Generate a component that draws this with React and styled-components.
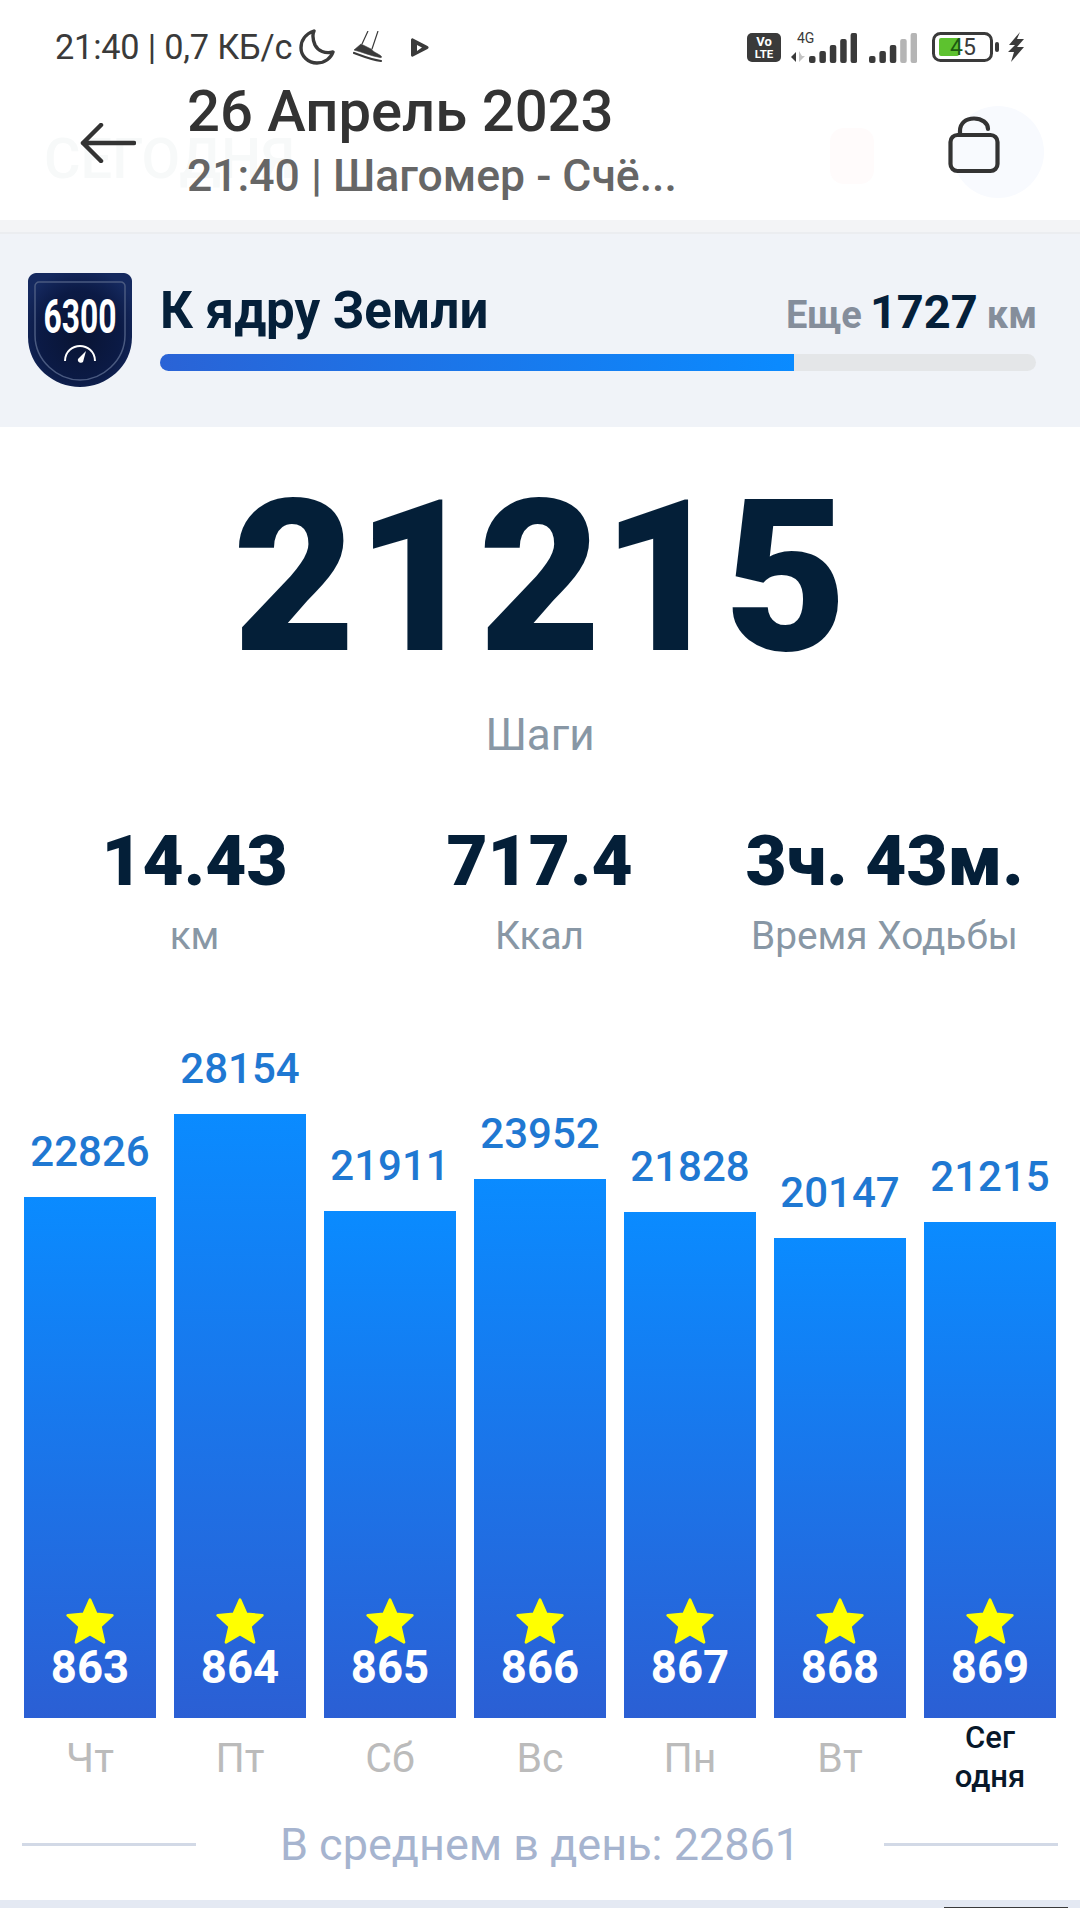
import React from 'react';
import styled, { createGlobalStyle } from 'styled-components';

const GlobalStyle = createGlobalStyle`
	html, body {
		margin: 0;
		padding: 0;
		background: #fff;
		font-family: Roboto, "Liberation Sans", sans-serif;
	}
`;

const Page = styled.div`
	width: 1080px;
	height: 1908px;
	overflow: hidden;
	display: flex;
	flex-direction: column;
	background: #fff;
`;

const StatusBar = styled.div`
	height: 78px;
	padding: 16px 56px 0 55px;
	box-sizing: border-box;
	display: flex;
	align-items: center;
	justify-content: space-between;
	color: #3a3a3a;
`;

const StatusGroup = styled.div`
	display: flex;
	align-items: center;
`;

const StatusText = styled.span`
	font-size: 34.3px;
	letter-spacing: -0.2px;
	margin-right: 7px;
`;

const Header = styled.div`
	position: relative;
	height: 142px;
	display: flex;
	align-items: flex-start;
	padding: 0 32px 0 80px;
	box-sizing: border-box;
`;

const GhostTitle = styled.span`
	position: absolute;
	left: 44px;
	top: 48px;
	font-size: 56px;
	font-weight: 500;
	color: #f7f9f9;
`;

const GhostCircle = styled.span`
	position: absolute;
	right: 36px;
	top: 28px;
	width: 92px;
	height: 92px;
	border-radius: 50%;
	background: #f8fafe;
`;

const GhostMark = styled.span`
	position: absolute;
	left: 830px;
	top: 50px;
	width: 44px;
	height: 56px;
	border-radius: 14px;
	background: #fffbfb;
`;

const BackButton = styled.div`
	position: relative;
	width: 56px;
	height: 40px;
	margin-top: 45px;
	margin-right: 51px;
`;

const HeaderTexts = styled.div`
	position: relative;
	flex: 1;
	display: flex;
	flex-direction: column;
`;

const HeaderTitle = styled.div`
	font-size: 58px;
	line-height: 66px;
	font-weight: 500;
	color: #333;
`;

const HeaderSub = styled.div`
	font-size: 44.5px;
	line-height: 50px;
	font-weight: 500;
	color: #666;
	margin-top: 7px;
`;

const LockButton = styled.div`
	position: relative;
	margin-top: 38px;
	margin-right: 48px;
`;

const GoalDivider = styled.div`
	height: 14px;
	box-sizing: border-box;
	background: #f3f4f6;
	border-bottom: 2px solid #ebedf0;
`;

const Goal = styled.div`
	height: 193px;
	box-sizing: border-box;
	background: #f0f3f8;
	display: flex;
	align-items: flex-start;
	padding: 39px 43px 0 28px;
	gap: 28px;
`;

const GoalBody = styled.div`
	flex: 1;
	display: flex;
	flex-direction: column;
	margin-top: 8px;
`;

const GoalRow = styled.div`
	display: flex;
	align-items: baseline;
	justify-content: space-between;
`;

const GoalTitle = styled.div`
	font-size: 51px;
	line-height: 60px;
	font-weight: 700;
	color: #05203a;
`;

const GoalLeft = styled.div`
	font-size: 38px;
	font-weight: 700;
	color: #858e9b;
`;

const GoalLeftValue = styled.span`
	font-size: 47px;
	color: #05203a;
	margin: 0 9px 0 8px;
`;

const Track = styled.div`
	height: 17px;
	margin-top: 13px;
	margin-right: 1px;
	border-radius: 9px;
	background: #e4e6e8;
	overflow: hidden;
`;

const Fill = styled.div`
	height: 100%;
	width: ${p => p.$percent}%;
	background: linear-gradient(90deg, #2a63d6, #0a8bff);
`;

const Total = styled.div`
	margin-top: 23px;
	text-align: center;
	font-size: 212px;
	line-height: 256px;
	font-weight: 900;
	color: #041f38;
`;

const TotalLabel = styled.div`
	text-align: center;
	font-size: 44px;
	line-height: 50px;
	color: #8897a5;
	margin-top: 4px;
`;

const Stats = styled.div`
	display: grid;
	grid-template-columns: 345px 345px 345px;
	margin-top: 60px;
	padding-left: 22px;
`;

const Stat = styled.div`
	display: flex;
	flex-direction: column;
	align-items: center;
`;

const StatValue = styled.div`
	font-size: 71px;
	line-height: 82px;
	font-weight: 900;
	color: #041f38;
	white-space: nowrap;
`;

const StatLabel = styled.div`
	font-size: 38.8px;
	line-height: 44px;
	color: #8897a5;
	margin-top: 12px;
	white-space: nowrap;
`;

const Chart = styled.div`
	flex: 1;
	display: grid;
	grid-template-columns: repeat(7, 132px);
	column-gap: 18px;
	padding: 0 24px;
	align-items: stretch;
`;

const Column = styled.div`
	display: flex;
	flex-direction: column;
	justify-content: flex-end;
	align-items: center;
`;

const BarValue = styled.div`
	font-size: 42px;
	line-height: 48px;
	font-weight: 500;
	color: #1f78d2;
	margin-bottom: 21px;
`;

const Bar = styled.div`
	width: 100%;
	height: ${p => p.$height}px;
	background: linear-gradient(180deg, #0a8bff 0%, #2b5fd4 100%);
	display: flex;
	flex-direction: column;
	justify-content: flex-end;
	align-items: center;
	padding-bottom: 25px;
	box-sizing: border-box;
`;

const BarRank = styled.div`
	font-size: 45.5px;
	line-height: 50px;
	font-weight: 700;
	color: #fff;
	margin-top: -2px;
`;

const DayLabel = styled.div`
	height: 100px;
	display: flex;
	align-items: flex-start;
	justify-content: center;
	text-align: center;
	padding-top: ${p => (p.$today ? '0' : '16px')};
	box-sizing: border-box;
	font-size: ${p => (p.$today ? '31px' : '41px')};
	line-height: ${p => (p.$today ? '39px' : '48px')};
	font-weight: ${p => (p.$today ? 500 : 400)};
	color: ${p => (p.$today ? '#08182a' : '#bbbbbb')};
`;

const Average = styled.div`
	height: 82px;
	display: flex;
	align-items: center;
	justify-content: space-between;
	padding: 0 22px 30px;
	box-sizing: border-box;
`;

const AverageLine = styled.div`
	width: 174px;
	height: 3px;
	background: #d2d9e6;
`;

const AverageText = styled.div`
	font-size: 45px;
	color: #a6b4cf;
`;

const BottomBand = styled.div`
	position: relative;
	height: 8px;
	background: #e4e9f3;
`;

const HomeBar = styled.span`
	position: absolute;
	left: 944px;
	bottom: 0;
	width: 124px;
	height: 1px;
	background: #3a3a3a;
`;

const MoonIcon = () => (
	<svg width="36" height="36" viewBox="0 0 36 36" fill="none" stroke="#3a3a3a" strokeWidth="3.4" strokeLinejoin="round">
		<path d="M15 2 C6 5 2 12 2 19 C2 27 9 34 18 34 C26 34 32 29 34 23 C26 25 19 22 16 16 C14 11 13 6 15 2 Z" />
	</svg>
);

const ShoeIcon = () => (
	<svg width="30" height="32" viewBox="0 0 30 32" fill="none" stroke="#3a3a3a" style={{ marginLeft: 18 }}>
		<path d="M15 0 L9 13 M25 0 L19 18" strokeWidth="1.2" />
		<path d="M8 13 L19 18.5 C20 21 25 22.5 28 25 C29 26 28.5 27 27 26.5 C18 25 9 21 1 19 Z" fill="#3a3a3a" strokeWidth="0.6" />
		<path d="M1 22 C9 25 19 29 28 30" strokeWidth="2.2" strokeLinecap="round" />
	</svg>
);

const PlayIcon = () => (
	<svg width="18" height="19" viewBox="0 0 18 19" fill="#3a3a3a" style={{ marginLeft: 28 }}>
		<path d="M2 0.5 L16.5 8 C18 9 18 10 16.5 11 L2 18.5 C1 19 0 18.5 0 17 L0 2 C0 1 1 0 2 0.5 Z M6 7 L6 13 L11 9.5 Z" fillRule="evenodd" />
	</svg>
);

const VoLteBadge = () => (
	<svg width="34" height="29" viewBox="0 0 34 29">
		<rect width="34" height="29" rx="5" fill="#3a3a3a" />
		<text x="17" y="13" textAnchor="middle" fontSize="13" fontWeight="700" fill="#fff" fontFamily="Roboto">Vo</text>
		<text x="17" y="25" textAnchor="middle" fontSize="11.5" fontWeight="700" fill="#fff" fontFamily="Roboto">LTE</text>
	</svg>
);

const SignalBars = ({ dimFrom = 5, barX = 0 }) => (
	<>
		{[0, 1, 2, 3, 4].map(i => (
			<rect
				key={i}
				x={barX + i * 10.4}
				y={[25, 20, 14, 8, 2][i]}
				width="6.5"
				height={[7, 12, 18, 24, 30][i]}
				rx="2"
				fill={i >= dimFrom ? '#b5b5b5' : '#3a3a3a'}
			/>
		))}
	</>
);

const Signal4G = () => (
	<svg width="67" height="32" viewBox="0 0 67 32" style={{ marginLeft: 9 }}>
		<text x="7" y="12" fontSize="14" fill="#3a3a3a" fontFamily="Roboto">4G</text>
		<path d="M6 21 L6 31 L1 26 Z" fill="#3a3a3a" />
		<path d="M9 20 L9 31 L15 25 L12 25 Z" fill="#c4c4c4" />
		<SignalBars barX={19} />
	</svg>
);

const SignalSim2 = () => (
	<svg width="48" height="32" viewBox="0 0 48 32" style={{ marginLeft: 12 }}>
		<SignalBars dimFrom={3} />
	</svg>
);

const Battery = () => (
	<svg width="67" height="30" viewBox="0 0 67 30" style={{ marginLeft: 15 }}>
		<rect x="1.5" y="1.5" width="58" height="27" rx="7" fill="none" stroke="#3a3a3a" strokeWidth="3" />
		<rect x="7" y="6" width="20" height="18" rx="2" fill="#5dc22f" />
		<text x="31" y="23" textAnchor="middle" fontSize="23" fill="#3a3a3a" fontFamily="Roboto">
			<tspan fill="#1d5a10">4</tspan>5
		</text>
		<rect x="63" y="10" width="4" height="10" rx="2" fill="#3a3a3a" />
	</svg>
);

const BoltIcon = () => (
	<svg width="16" height="30" viewBox="0 0 16 30" fill="#3a3a3a" style={{ marginLeft: 9 }}>
		<path d="M12 0 L1 13 L7 13 L0 20 L6 20 L3 30 L16 15 L9 15 L16 7 L9 7 Z" />
	</svg>
);

const BackIcon = () => (
	<svg width="56" height="40" viewBox="0 0 56 40" fill="none" stroke="#333" strokeWidth="4.5" strokeLinecap="round" strokeLinejoin="round">
		<path d="M54 20 H3 M21 2 L3 20 L21 38" />
	</svg>
);

const LockIcon = () => (
	<svg width="52" height="58" viewBox="0 0 52 58" fill="none" stroke="#333" strokeWidth="4.2" strokeLinejoin="round" strokeLinecap="round">
		<rect x="2.5" y="19" width="47" height="36" rx="7" />
		<path d="M12 19 V15 C12 7 18 2.5 26 2.5 C34 2.5 40 7 40 13" />
	</svg>
);

const GoalBadge = () => (
	<svg width="104" height="114" viewBox="0 0 104 114">
		<defs>
			<radialGradient id="badge" cx="0.5" cy="0.55" r="0.6">
				<stop offset="0" stopColor="#091433" />
				<stop offset="0.65" stopColor="#0b1a45" />
				<stop offset="1" stopColor="#15295f" />
			</radialGradient>
		</defs>
		<path d="M8 0 H96 C100 0 104 4 104 8 V64 C104 94 78 114 52 114 C26 114 0 94 0 64 V8 C0 4 4 0 8 0 Z" fill="url(#badge)" />
		<path d="M11 9 H93 C95 9 97 11 97 13 V62 C97 88 74 107 52 107 C30 107 7 88 7 62 V13 C7 11 9 9 11 9 Z" fill="none" stroke="#4a5a80" strokeWidth="1.5" />
		<text x="52" y="60" textAnchor="middle" fontSize="49" fontWeight="700" fill="#fff" fontFamily="Roboto" textLength="73" lengthAdjust="spacingAndGlyphs">6300</text>
		<path d="M37 88 C37 78 45 73 52 73 C59 73 67 78 67 88" fill="none" stroke="#fff" strokeWidth="2" />
		<path d="M58 78 L55 89 C53 91 49 89 50 86 Z" fill="#fff" />
	</svg>
);

const StarIcon = () => (
	<svg width="50" height="48" viewBox="0 0 48 46" fill="#ffff00" stroke="#ffff00" strokeWidth="2.5" strokeLinejoin="round">
		<path d="M24 2.5 L30 16 L45.5 17.5 L34 28 L37.5 43.5 L24 35.5 L10.5 43.5 L14 28 L2.5 17.5 L18 16 Z" />
	</svg>
);

const days = [
	{ steps: 22826, rank: 863, day: 'Чт', height: 521 },
	{ steps: 28154, rank: 864, day: 'Пт', height: 604 },
	{ steps: 21911, rank: 865, day: 'Сб', height: 507 },
	{ steps: 23952, rank: 866, day: 'Вс', height: 539 },
	{ steps: 21828, rank: 867, day: 'Пн', height: 506 },
	{ steps: 20147, rank: 868, day: 'Вт', height: 480 },
	{ steps: 21215, rank: 869, day: <>Сег<br />одня</>, height: 496, today: true },
];

const stats = [
	{ value: '14.43', label: 'км' },
	{ value: '717.4', label: 'Ккал' },
	{ value: '3ч. 43м.', label: 'Время Ходьбы' },
];

const App = () => (
	<Page>
		<GlobalStyle />
		<StatusBar>
			<StatusGroup>
				<StatusText>21:40 | 0,7 КБ/с</StatusText>
				<MoonIcon />
				<ShoeIcon />
				<PlayIcon />
			</StatusGroup>
			<StatusGroup>
				<VoLteBadge />
				<Signal4G />
				<SignalSim2 />
				<Battery />
				<BoltIcon />
			</StatusGroup>
		</StatusBar>
		<Header>
			<GhostTitle>СЕГОДНЯ</GhostTitle>
			<GhostMark />
			<GhostCircle />
			<BackButton><BackIcon /></BackButton>
			<HeaderTexts>
				<HeaderTitle>26 Апрель 2023</HeaderTitle>
				<HeaderSub>21:40 | Шагомер - Счё...</HeaderSub>
			</HeaderTexts>
			<LockButton><LockIcon /></LockButton>
		</Header>
		<GoalDivider />
		<Goal>
			<GoalBadge />
			<GoalBody>
				<GoalRow>
					<GoalTitle>К ядру Земли</GoalTitle>
					<GoalLeft>Еще<GoalLeftValue>1727</GoalLeftValue>км</GoalLeft>
				</GoalRow>
				<Track><Fill $percent={72.4} /></Track>
			</GoalBody>
		</Goal>
		<Total>21215</Total>
		<TotalLabel>Шаги</TotalLabel>
		<Stats>
			{stats.map(s => (
				<Stat key={s.label}>
					<StatValue>{s.value}</StatValue>
					<StatLabel>{s.label}</StatLabel>
				</Stat>
			))}
		</Stats>
		<Chart>
			{days.map(d => (
				<Column key={d.rank}>
					<BarValue>{d.steps}</BarValue>
					<Bar $height={d.height}>
						<StarIcon />
						<BarRank>{d.rank}</BarRank>
					</Bar>
					<DayLabel $today={d.today}>{d.day}</DayLabel>
				</Column>
			))}
		</Chart>
		<Average>
			<AverageLine />
			<AverageText>В среднем в день: 22861</AverageText>
			<AverageLine />
		</Average>
		<BottomBand><HomeBar /></BottomBand>
	</Page>
);

export default App;
